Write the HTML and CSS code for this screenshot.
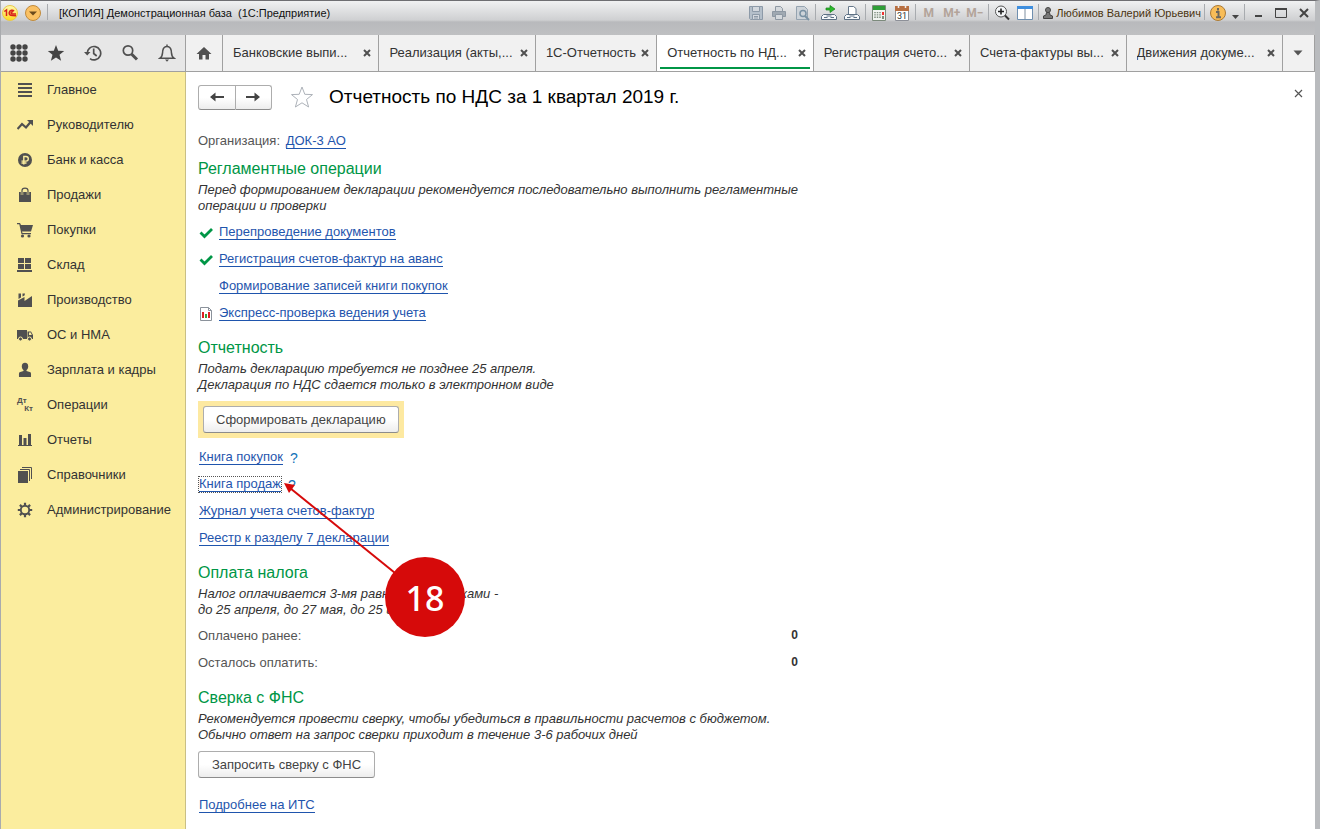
FILE: index.html
```html
<!DOCTYPE html>
<html lang="ru">
<head>
<meta charset="utf-8">
<title>Отчетность по НДС за 1 квартал 2019 г.</title>
<link rel="stylesheet" href="styles.css">
</head>
<body>
<div class="window">
  <header class="titlebar">
    <svg class="logo" viewBox="0 0 16 16"><defs><linearGradient id="sun" x1="0" y1="0" x2="0" y2="1"><stop offset="0" stop-color="#fff9b0"/><stop offset="1" stop-color="#ffd91c"/></linearGradient></defs><circle cx="8" cy="8" r="7.5" fill="url(#sun)" stroke="#e8c94a"/><path d="M2.300 6.500 4.500 5v6M12 6.200C11 4.600 7.300 4.700 7.100 8c.1 2.500 2 2.700 7 2.700M11 7.300C10 6.400 9 7 9 8c0 1 1 1 5 1" fill="none" stroke="#d8201c" stroke-width="1.500"/></svg>
    <button class="orb" aria-label="Главное меню"><svg width="16" height="16" viewBox="0 0 16 16"><circle cx="8" cy="8" r="7.500" fill="#fbc163" stroke="#c08a3c"/><path d="M4 6.500h8L8 10.500z" fill="#6b4a1c"/></svg></button>
    <span class="sep"></span>
    <span class="caption">[КОПИЯ] Демонстрационная база &nbsp;(1С:Предприятие)</span>
    <div class="tools">
      <button aria-label="Сохранить"><svg width="16" height="16" viewBox="0 0 16 16" fill="none" stroke="#8d9aa8"><path d="M1.500 1.500h13v13h-12l-1-1z" fill="#b4bfca"/><path d="M4.500 1.500h7v5h-7zM4.500 9.500h7v5h-7z" fill="#d3d8de"/><path d="M6 11.500h4M6 13h4"/></svg></button>
      <button aria-label="Печать"><svg width="16" height="16" viewBox="0 0 16 16" fill="none" stroke="#8e98a3"><path d="M4.500 6V1.500h5l2 2V6" fill="#d5d9dd"/><path d="M1.500 6.500h13v5h-13z" fill="#a0a9b2"/><path d="M4.500 9.500h7v5h-7z" fill="#d5d9dd"/></svg></button>
      <button aria-label="Предварительный просмотр"><svg width="16" height="16" viewBox="0 0 16 16" fill="none" stroke="#95a3b0"><path d="M2.500 1.500h8l3 3v10h-11z" fill="#cdd3d9"/><circle cx="9" cy="8.500" r="3" stroke="#7991a3" stroke-width="1.500"/><path d="m11 11 4 4" stroke="#7991a3" stroke-width="2"/></svg></button>
      <span class="sep"></span>
      <button aria-label="Перейти по ссылке"><svg width="16" height="16" viewBox="0 0 16 16"><path d="M2.500 9.500h11l2 2v3H.500v-3z" fill="#f7f9fb" stroke="#5d7084"/><path d="M3 12.500h3.500M9.500 12.500H13M5.500 11h5" stroke="#5d7084"/><path d="M5 3h4V.500L14 4 9 7.500V5H5z" fill="#2dbb2d" stroke="#16831a" stroke-width=".7"/></svg></button>
      <button aria-label="Получить ссылку"><svg width="16" height="16" viewBox="0 0 16 16"><path d="M4.500 9.500v-8h5l2.500 2v6" fill="#fff" stroke="#66788b"/><path d="M2.500 9.500h11l2 2v3H.500v-3z" fill="#f7f9fb" stroke="#5d7084"/><path d="M3 12.500h3.500M9.500 12.500H13M5.500 11h5" stroke="#5d7084"/></svg></button>
      <span class="sep"></span>
      <button aria-label="Калькулятор"><svg width="14" height="16" viewBox="0 0 14 16"><path d="M.500.500h13v15H.500z" fill="#f1f4f1" stroke="#7c8a7c"/><path d="M1 1h12v4H1z" fill="#2f9e38"/><path d="M3 7v7M5.500 7v7M8 7v7" stroke="#7d8c7d" stroke-width="1.500" stroke-dasharray="1.300 1"/><path d="M11 7v3" stroke="#e33" stroke-width="2"/><path d="M11 11v3" stroke="#7d8c7d" stroke-width="2"/></svg></button>
      <button aria-label="Календарь" class="calendar"><svg width="14" height="16" viewBox="0 0 14 16"><path d="M.500 1.500h13v14H.500z" fill="#fff" stroke="#8d9098"/><path d="M0 1h14v5H0z" fill="#b76f42"/><path d="M3.500 0v3M10.500 0v3" stroke="#eee" stroke-width="1.500"/><text x="7" y="14" text-anchor="middle" class="day">31</text></svg></button>
      <span class="sep"></span>
      <button class="mem">M</button><button class="mem">M+</button><button class="mem">M−</button>
      <span class="sep"></span>
      <button aria-label="Масштаб"><svg width="16" height="16" viewBox="0 0 16 16" fill="none"><circle cx="7" cy="6.500" r="5.500" fill="#f5f7f9" stroke="#555"/><path d="M7 3.500v6M4 6.500h6" stroke="#222" stroke-width="1.600"/><path d="m11 10.500 4 4" stroke="#333" stroke-width="2"/></svg></button>
      <button aria-label="Панели"><svg width="16" height="16" viewBox="0 0 16 16"><path d="M.500 1.500h15v13H.500z" fill="#fff" stroke="#6f8faf"/><path d="M0 1h16v3H0z" fill="#3e8ede"/><path d="M8 4v10" stroke="#7f8fa0"/></svg></button>
      <span class="sep"></span>
      <button class="user"><svg width="10" height="12" viewBox="0 0 10 12"><circle cx="5" cy="3" r="2.500" fill="#777" stroke="#444"/><path d="M3.500 5.500h3L7 8l2.500 1v2.500H.500V9L3 8z" fill="#777" stroke="#444"/></svg>Любимов Валерий Юрьевич</button>
      <span class="sep"></span>
      <button aria-label="Информация"><svg width="16" height="16" viewBox="0 0 16 16"><circle cx="8" cy="8" r="7.500" fill="#f8bd58" stroke="#ab7a35"/><path d="M8 3v2.500M6 7h2.500v5M6 12.200h5" fill="none" stroke="#6c685f" stroke-width="2"/></svg></button>
      <button class="narrow" aria-label="Настройки"><svg width="9" height="12" viewBox="0 0 9 12"><path d="M1 8h7l-3.500 4z" fill="#444"/></svg></button>
      <span class="sep"></span>
      <button aria-label="Свернуть"><svg width="12" height="12" viewBox="0 0 12 12"><path d="M3 9h7" stroke="#444" stroke-width="2"/></svg></button>
      <button aria-label="Развернуть"><svg width="12" height="12" viewBox="0 0 12 12"><path d="M.500 1.500h11v9H.500z" fill="none" stroke="#444"/><path d="M0 2h12" stroke="#444" stroke-width="2"/></svg></button>
      <button aria-label="Закрыть окно"><svg width="12" height="12" viewBox="0 0 12 12"><path d="m2 2 8 8M10 2l-8 8" stroke="#444" stroke-width="2"/></svg></button>
    </div>
  </header>

  <div class="topbar">
    <div class="quick">
      <button aria-label="Меню функций"><svg width="18" height="18" viewBox="0 0 18 18" fill="#444"><circle cx="3" cy="3" r="2.700"/><circle cx="9" cy="3" r="2.700"/><circle cx="15" cy="3" r="2.700"/><circle cx="3" cy="9" r="2.700"/><circle cx="9" cy="9" r="2.700"/><circle cx="15" cy="9" r="2.700"/><circle cx="3" cy="15" r="2.700"/><circle cx="9" cy="15" r="2.700"/><circle cx="15" cy="15" r="2.700"/></svg></button>
      <button aria-label="Избранное"><svg width="18" height="18" viewBox="0 0 18 18"><path d="m9 1 2.200 5.700 6 .3-4.700 3.800 1.600 6L9 13.400l-5.100 3.400 1.600-6L.800 7l6-.3z" fill="#444"/></svg></button>
      <button aria-label="История"><svg width="18" height="18" viewBox="0 0 18 18" fill="none" stroke="#505050" stroke-width="1.700"><path d="M3.300 9.500A6.700 6.700 0 1 1 6 14.600M9.700 4.500v5l3 2.500"/><path d="M0 8h6.500L3.200 11.500z" fill="#505050" stroke="none"/></svg></button>
      <button aria-label="Поиск"><svg width="18" height="18" viewBox="0 0 18 18" fill="none" stroke="#505050"><circle cx="7" cy="6.500" r="4.700" stroke-width="1.700"/><path d="m10.500 10 5.500 5.500" stroke-width="3"/></svg></button>
      <button aria-label="Оповещения"><svg width="18" height="18" viewBox="0 0 18 18" fill="none" stroke="#505050" stroke-width="1.500"><path d="M2 14.200c3-2 2.300-4.700 2.800-7.700C5.300 4 7 2.500 9 2.500s3.700 1.500 4.200 4c.5 3-.2 5.700 2.800 7.700zM9 .500v2"/><path d="M7 15.500h4l-2 2.300z" fill="#505050" stroke="none"/></svg></button>
    </div>
    <nav class="tabs">
      <a class="tab home" href="#home" aria-label="Начальная страница"><svg width="16" height="14" viewBox="0 0 16 14"><path d="M8 1 .500 8H3v5.500h3.500V9h3v4.500H13V8h2.500z" fill="#505050"/></svg></a>
      <div class="tab"><a href="#t1">Банковские выпи...</a><button class="x" aria-label="Закрыть"><svg width="8" height="8" viewBox="0 0 8 8"><path d="m1 1 6 6M7 1 1 7"/></svg></button></div>
      <div class="tab"><a href="#t2">Реализация (акты,...</a><button class="x" aria-label="Закрыть"><svg width="8" height="8" viewBox="0 0 8 8"><path d="m1 1 6 6M7 1 1 7"/></svg></button></div>
      <div class="tab short"><a href="#t3">1С-Отчетность</a><button class="x" aria-label="Закрыть"><svg width="8" height="8" viewBox="0 0 8 8"><path d="m1 1 6 6M7 1 1 7"/></svg></button></div>
      <div class="tab active"><a href="#t4">Отчетность по НД...</a><button class="x" aria-label="Закрыть"><svg width="8" height="8" viewBox="0 0 8 8"><path d="m1 1 6 6M7 1 1 7"/></svg></button></div>
      <div class="tab"><a href="#t5">Регистрация счето...</a><button class="x" aria-label="Закрыть"><svg width="8" height="8" viewBox="0 0 8 8"><path d="m1 1 6 6M7 1 1 7"/></svg></button></div>
      <div class="tab"><a href="#t6">Счета-фактуры вы...</a><button class="x" aria-label="Закрыть"><svg width="8" height="8" viewBox="0 0 8 8"><path d="m1 1 6 6M7 1 1 7"/></svg></button></div>
      <div class="tab"><a href="#t7">Движения докуме...</a><button class="x" aria-label="Закрыть"><svg width="8" height="8" viewBox="0 0 8 8"><path d="m1 1 6 6M7 1 1 7"/></svg></button></div>
      <button class="tab more" aria-label="Все вкладки"><svg width="10" height="6" viewBox="0 0 10 6"><path d="M.500.500h9L5 5.500z" fill="#555"/></svg></button>
    </nav>
  </div>

  <div class="body">
    <nav class="sidebar">
      <a href="#main"><svg viewBox="0 0 16 16"><path d="M1 2h14M1 6h14M1 10h14M1 14h14" stroke="#505050" stroke-width="2"/></svg>Главное</a>
      <a href="#head"><svg viewBox="0 0 16 16"><path d="m.500 12 4.500-5 4 3.500 5-6" fill="none" stroke="#505050" stroke-width="2.200"/><path d="M10 3h6v6z" fill="#505050"/></svg>Руководителю</a>
      <a href="#bank"><svg viewBox="0 0 16 16"><circle cx="8" cy="8" r="7" fill="#505050"/><path d="M6.800 12.500V4.500h2.200a2.300 2.300 0 0 1 0 4.600H4.500M4.500 11h5" fill="none" stroke="#fbed9e" stroke-width="1.400"/></svg>Банк и касса</a>
      <a href="#sales"><svg viewBox="0 0 16 16"><path d="M2 5h12v10H2z" fill="#505050"/><path d="M5 8V3.500C5 .200 11 .200 11 3.500V8" fill="none" stroke="#fbed9e" stroke-width="2.400"/><path d="M5 8V3.500C5 .200 11 .200 11 3.500V8" fill="none" stroke="#505050" stroke-width="1.200"/></svg>Продажи</a>
      <a href="#buy"><svg viewBox="0 0 16 16" fill="#505050"><path d="M0 1h3l1 2h12l-2 6.500H5L5.500 11H14v1.200H4.500L2.300 2.300H0z"/><circle cx="5.500" cy="14" r="1.600"/><circle cx="12" cy="14" r="1.600"/></svg>Покупки</a>
      <a href="#store"><svg viewBox="0 0 16 16" fill="#505050"><path d="M1 1h6v5H1zM8 1h6v5H8zM1 7h6v5H1zM8 7h6v5H8zM0 13h15v2H0z"/></svg>Склад</a>
      <a href="#prod"><svg viewBox="0 0 16 16" fill="#505050"><path d="M1 15V8.500L7.500 5v4L15 4v11zM1.500 1.500H4v4L1.500 7zM5.500 1.500H8L7.500 3.500l-2 1z"/></svg>Производство</a>
      <a href="#os"><svg viewBox="0 0 16 16"><path d="M0 3h10v9H0zM10.500 4.500H14L16 8v4h-5.500z" fill="#505050"/><path d="M12 5.500h1.700L14.800 8H12z" fill="#fbed9e"/><g fill="#505050" stroke="#fbed9e"><circle cx="3.500" cy="12" r="2"/><circle cx="12.500" cy="12" r="2"/></g></svg>ОС и НМА</a>
      <a href="#salary"><svg viewBox="0 0 16 16" fill="#505050"><ellipse cx="8" cy="4.500" rx="3.200" ry="3.700"/><path d="M6.500 7h3v2l4 1.200c.8.800.5 3 .5 4.800H2c0-1.800-.3-4 .5-4.800l4-1.200z"/></svg>Зарплата и кадры</a>
      <a href="#ops"><span class="dtkt" aria-hidden="true"><b>Дт</b><b>Кт</b></span>Операции</a>
      <a href="#reports"><svg viewBox="0 0 16 16" fill="#505050"><path d="M2 3h3v10H2zM6.500 6h3v7h-3zM11 2h3v11h-3zM1 13h14v1H1z"/></svg>Отчеты</a>
      <a href="#refs"><svg viewBox="0 0 16 16"><path d="M1 4h10v12H1z" fill="#505050"/><path d="M3 2.500h9.500V14M5 .500h9.500V12" fill="none" stroke="#505050"/></svg>Справочники</a>
      <a href="#admin"><svg viewBox="0 0 16 16" fill="none" stroke="#505050"><circle cx="8" cy="8" r="4.200" stroke-width="1.900"/><path d="M8 .800v3M8 12.200v3M.800 8h3M12.200 8h3M2.900 2.900 5 5M11 11l2.100 2.100M2.900 13.100 5 11M11 5l2.100-2.100" stroke-width="2.200"/></svg>Администрирование</a>
    </nav>

    <main class="form">
      <div class="form-head">
        <div class="history"><button aria-label="Назад"><svg width="14" height="10" viewBox="0 0 14 10"><path d="M0 5 5.500.500V4H14v2H5.500v3.500z"/></svg></button><button aria-label="Вперед"><svg width="14" height="10" viewBox="0 0 14 10"><path d="M14 5 8.500.500V4H0v2h8.500v3.500z"/></svg></button></div>
        <button class="fav" aria-label="В избранное"><svg width="24" height="24" viewBox="0 0 24 24"><path d="m12 2 2.800 7.300 7.700.3-6 4.900 2.100 7.500L12 17.800 5.400 22l2.100-7.500-6-4.900 7.700-.3z" fill="#fff" stroke="#adb2b9"/></svg></button>
        <h1>Отчетность по НДС за 1 квартал 2019 г.</h1>
        <button class="close" aria-label="Закрыть форму"><svg width="9" height="9" viewBox="0 0 9 9"><path d="m1 1 7 7M8 1 1 8" stroke="#555" stroke-width="1.200"/></svg></button>
      </div>
      <div class="org">Организация: <a class="link" href="#org">ДОК-3 АО</a></div>

      <section class="first">
        <h2>Регламентные операции</h2>
        <p>Перед формированием декларации рекомендуется последовательно выполнить регламентные операции и проверки</p>
        <ul class="steps">
          <li><svg viewBox="0 0 14 14"><path d="m1.500 6.500 4 4L13 3" fill="none" stroke="#009646" stroke-width="2.800"/></svg><a class="link" href="#s1">Перепроведение документов</a></li>
          <li><svg viewBox="0 0 14 14"><path d="m1.500 6.500 4 4L13 3" fill="none" stroke="#009646" stroke-width="2.800"/></svg><a class="link" href="#s2">Регистрация счетов-фактур на аванс</a></li>
          <li><span class="blank"></span><a class="link" href="#s3">Формирование записей книги покупок</a></li>
          <li><svg viewBox="0 0 14 14"><path d="M1.500.500h8l3 3v10h-11z" fill="#fff" stroke="#8b929b"/><path d="M9.500.500v3h3" fill="none" stroke="#8b929b"/><path d="M4 5v6" stroke="#e02020" stroke-width="2"/><path d="M7 7v4" stroke="#3da03d" stroke-width="2"/><path d="M10 5v6" stroke="#e02020" stroke-width="2"/></svg><a class="link" href="#s4">Экспресс-проверка ведения учета</a></li>
        </ul>
      </section>

      <section>
        <h2>Отчетность</h2>
        <p>Подать декларацию требуется не позднее 25 апреля.<br>Декларация по НДС сдается только в электронном виде</p>
        <div class="accent"><button class="btn">Сформировать декларацию</button></div>
        <ul class="books">
          <li><a class="link" href="#b1">Книга покупок</a><button class="help" aria-label="Справка: Книга покупок">?</button></li>
          <li><a class="link focused" href="#b2">Книга продаж</a><button class="help" aria-label="Справка: Книга продаж">?</button></li>
          <li><a class="link" href="#b3">Журнал учета счетов-фактур</a></li>
          <li><a class="link" href="#b4">Реестр к разделу 7 декларации</a></li>
        </ul>
      </section>

      <section>
        <h2>Оплата налога</h2>
        <p>Налог оплачивается 3-мя равными платежами -<br>до 25 апреля, до 27 мая, до 25 июня</p>
        <dl>
          <div><dt>Оплачено ранее:</dt><dd>0</dd></div>
          <div><dt>Осталось оплатить:</dt><dd>0</dd></div>
        </dl>
      </section>

      <section>
        <h2>Сверка с ФНС</h2>
        <p>Рекомендуется провести сверку, чтобы убедиться в правильности расчетов с бюджетом.<br>Обычно ответ на запрос сверки приходит в течение 3-6 рабочих дней</p>
        <button class="btn check">Запросить сверку с ФНС</button>
      </section>
      <div class="its"><a class="link" href="#its">Подробнее на ИТС</a></div>

      <svg class="callout" width="184" height="156" viewBox="0 0 184 156"><path d="M8 7 118 96" stroke="#d60a0a" stroke-width="2"/><path d="m2 2 11 2-6 8z" fill="#d60a0a"/><circle cx="143" cy="116" r="40" fill="#d60a0a"/><text x="143" y="130" text-anchor="middle">18</text></svg>
    </main>
  </div>
</div>
</body>
</html>
```
FILE: styles.css
```css
* { box-sizing: border-box; }
body {
  margin: 0;
  font-family: "Liberation Sans", Arial, sans-serif;
  font-size: 13px;
  line-height: 16px;
  color: #444;
}
button {
  display: flex;
  align-items: center;
  justify-content: center;
  padding: 0;
  border: 0;
  background: none;
  font: inherit;
  color: inherit;
}
a { color: inherit; text-decoration: none; }
svg { display: block; flex: none; }
h1, h2, p, ul, dl, dd { margin: 0; padding: 0; font-weight: normal; }

.window {
  display: flex;
  flex-direction: column;
  min-height: 100vh;
  border-left: 1px solid #a9abae;
  border-right: 5px solid #b9bbbe;
  border-top: 1px solid #6e6e72;
}

.titlebar {
  display: flex;
  align-items: flex-start;
  height: 34px;
  padding: 1px 0 0 1px;
  background: linear-gradient(#f0f1f2 0, #cfd0d2 19px, #b8b9bc 21px, #bfc0c2 100%);
  color: #222;
}
.titlebar button { width: 23px; height: 22px; }
.logo { width: 16px; height: 16px; margin-top: 3px; }
.titlebar .orb { margin: 0 1px 0 3px; }
.titlebar .sep { width: 1px; height: 16px; margin: 2px 1px 2px 2px; background: #a8abaf; }
.caption { margin-left: 10px; font-size: 11px; line-height: 22px; white-space: nowrap; color: #111; }
.tools { display: flex; margin-left: auto; }
.titlebar .mem { font-family: Roboto, sans-serif; font-size: 12px; font-weight: bold; color: #b3a49a; }
.titlebar .user { width: auto; gap: 3px; padding: 0 1px 0 3px; font-size: 11px; white-space: nowrap; color: #4a3410; }
.titlebar .narrow { width: 13px; }
.day { font: 9px Roboto, sans-serif; fill: #333; }

.topbar { display: flex; height: 37px; border-bottom: 1px solid #a0a0a0; }
.quick {
  display: flex;
  flex: none;
  width: 185px;
  background: #e7e7e7;
  border-right: 1px solid #a0a0a0;
}
.quick button { flex: 1; }
.tabs { display: flex; flex: 1; min-width: 0; background: #f1f1f1; }
.tab {
  display: flex;
  flex: 137 1 19px;
  align-items: center;
  justify-content: space-between;
  min-width: 0;
  padding: 0 7px 0 10px;
  border-right: 1px solid #a0a0a0;
  color: #333;
}
.tab a { overflow: hidden; white-space: nowrap; }
.tab.short { flex-grow: 102; }
.tab.home { flex: 0 0 37px; justify-content: center; padding: 0; }
.tab.more { flex: 0 0 32px; justify-content: center; padding: 0; border-right: 1px solid #a0a0a0; }
.tab.active {
  position: relative;
  background: #fff;
}
.tab.active::after {
  content: "";
  position: absolute;
  left: 3px;
  right: 3px;
  bottom: 2px;
  height: 2px;
  background: #009646;
}
.x path { stroke: #505050; stroke-width: 2; }

.body { display: flex; flex: 1; }
.sidebar {
  flex: none;
  width: 185px;
  background: #fbed9e;
  border-right: 1px solid #c9bf85;
}
.sidebar a {
  display: flex;
  align-items: center;
  gap: 14px;
  height: 35px;
  padding: 1px 0 0 16px;
  color: #333;
  white-space: nowrap;
}
.sidebar svg { width: 16px; height: 16px; }
.dtkt { width: 16px; font-size: 8px; line-height: 8px; color: #505050; }
.dtkt b { display: block; }
.dtkt b + b { text-align: right; }

.form { position: relative; flex: 1; padding: 12px 12px 11px; background: #fff; }
.form-head { display: flex; align-items: center; height: 26px; }
.history { display: flex; width: 74px; height: 25px; }
.history button {
  flex: 1;
  border: 1px solid #adadad;
  border-bottom-color: #8c8c8c;
  border-radius: 3px 0 0 3px;
  background: linear-gradient(#fff 50%, #ededed);
}
.history button + button { border-left: 0; border-radius: 0 3px 3px 0; }
.history path { fill: #444; }
.fav { margin: 0 15px 0 18px; }
h1 { font-size: 19px; line-height: 26px; color: #000; }
.close { width: 9px; height: 9px; margin: 0 0 8px auto; }
.org { margin-top: 17px; line-height: 27px; color: #555; }
.org .link { margin-left: 2px; }
.link { color: #1f55ad; border-bottom: 1px solid #1f55ad; line-height: 14px; }

section { margin-top: 11px; }
section.first { margin-top: 5px; }
h2 { margin-bottom: 3px; font-size: 16px; line-height: 20px; color: #009646; }
p { max-width: 610px; font-style: italic; color: #333; }
ul { margin-top: 5px; list-style: none; }
li { display: flex; align-items: center; height: 27px; }
.steps svg, .blank { width: 14px; height: 14px; margin: 0 6px 0 1px; }
.accent { width: fit-content; margin-top: 8px; padding: 5px; background: #fde9a1; }
.books { margin-top: 6px; padding-left: 1px; }
.btn {
  height: 27px;
  padding: 0 12px;
  border: 1px solid #adadad;
  border-bottom-color: #8c8c8c;
  border-radius: 3px;
  background: linear-gradient(#fff 50%, #ededed);
  color: #444;
}
.check { margin-top: 8px; padding: 0 13px; }
.focused { outline: 1px dotted #555; }
.help { margin-left: 7px; font-size: 14px; color: #1272b8; }
dl { margin-top: 4px; max-width: 600px; padding-bottom: 1px; }
dl div { display: flex; justify-content: space-between; line-height: 27px; color: #555; }
dd { font-weight: bold; font-size: 12px; color: #333; }
.its { margin-top: 13px; padding-left: 1px; line-height: 27px; }

.callout { position: absolute; left: 96px; top: 409px; pointer-events: none; }
.callout text { font: 500 34px "Noto Sans", sans-serif; fill: #fff; }
```
